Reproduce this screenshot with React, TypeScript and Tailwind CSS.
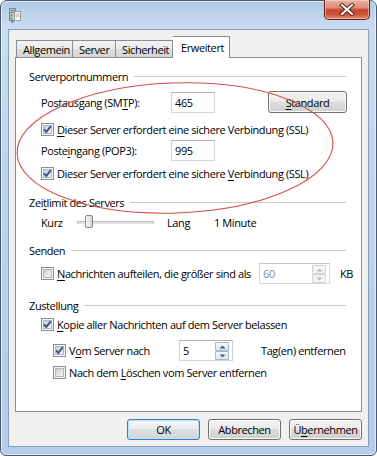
import React from "react";

const U = ({ children }: { children: React.ReactNode }) => (
  <span className="underline underline-offset-[2px] decoration-[1px]">{children}</span>
);

function Checkbox({ checked }: { checked?: boolean }) {
  return (
    <svg width="13" height="13" viewBox="0 0 13 13" className="shrink-0">
      <defs>
        <linearGradient id="cbg" x1="0" y1="0" x2="1" y2="1">
          <stop offset="0" stopColor="#c9cdd3" />
          <stop offset="1" stopColor="#f7f7f7" />
        </linearGradient>
      </defs>
      <rect x="0.5" y="0.5" width="12" height="12" fill="#f6f6f6" stroke="#8e8f8f" />
      <rect x="2.5" y="2.5" width="8" height="8" fill="url(#cbg)" stroke="#b2b7bd" />
      {checked && (
        <path d="M3.1 6.3 L5.3 8.9 L9.9 3.1" fill="none" stroke="#3a5596" strokeWidth="1.9" />
      )}
    </svg>
  );
}

function CbRow({
  checked,
  children,
  indent,
}: {
  checked?: boolean;
  children: React.ReactNode;
  indent?: boolean;
}) {
  return (
    <div className={indent ? "flex items-center h-[16px] pl-[37px]" : "flex items-center h-[16px] pl-[25px]"}>
      <Checkbox checked={checked} />
      <span className="ml-[3px] whitespace-nowrap">{children}</span>
    </div>
  );
}

function Header({ children, mt }: { children: React.ReactNode; mt: string }) {
  return (
    <div className={`flex items-center h-[16px] pl-[13px] pr-[15px] ${mt}`}>
      <span className="whitespace-nowrap">{children}</span>
      <div className="flex-1 ml-[6px] h-px bg-[#c3cad1]" />
    </div>
  );
}

function Btn({ children, def }: { children: React.ReactNode; def?: boolean }) {
  return (
    <div
      className={
        def
          ? "flex items-center justify-center w-[73px] h-[21px] rounded-[3px] border border-[#3c7fb1] shadow-[inset_0_0_0_1px_#b9e2f8] bg-[linear-gradient(180deg,#f3f5f7_0%,#eceef0_45%,#dde0e3_50%,#d0d4d8_100%)]"
          : "flex items-center justify-center w-[73px] h-[21px] rounded-[3px] border border-[#707070] shadow-[inset_0_0_0_1px_#fbfbfb] bg-[linear-gradient(180deg,#f2f2f2_0%,#ebebeb_45%,#dddddd_50%,#cfcfcf_100%)]"
      }
    >
      {children}
    </div>
  );
}

function SpinBtn({ up, disabled }: { up?: boolean; disabled?: boolean }) {
  return (
    <div
      className={
        disabled
          ? "flex items-center justify-center h-[9px] border border-[#d2d2d2] bg-[#f4f4f4] rounded-[1px]"
          : "flex items-center justify-center h-[9px] border border-[#a8b6c8] bg-[linear-gradient(180deg,#f4f7fa_0%,#dfe6ee_100%)] rounded-[1px]"
      }
    >
      <svg width="7" height="4" viewBox="0 0 7 4">
        {up ? (
          <path d="M0.5 3.5 L3.5 0.5 L6.5 3.5 Z" fill={disabled ? "#b9b9b9" : "#4b6188"} />
        ) : (
          <path d="M0.5 0.5 L3.5 3.5 L6.5 0.5 Z" fill={disabled ? "#b9b9b9" : "#4b6188"} />
        )}
      </svg>
    </div>
  );
}

function Spin({ value, disabled, wide }: { value: string; disabled?: boolean; wide?: boolean }) {
  return (
    <div
      className={
        wide
          ? "flex h-[21px] w-[71px] border border-[#d5d8dd] border-t-[#c2c5cb] bg-white"
          : "flex h-[21px] w-[54px] border border-[#d0d5dc] border-t-[#abadb3] bg-white"
      }
    >
      <div className={disabled ? "flex-1 flex items-center pl-[3px] text-[#8a8a8a]" : "flex-1 flex items-center pl-[3px]"}>
        {value}
      </div>
      <div className="flex flex-col w-[14px] mr-[3px] mt-[1px]">
        <SpinBtn up disabled={disabled} />
        <SpinBtn disabled={disabled} />
      </div>
    </div>
  );
}

function TextBox({ value }: { value: string }) {
  return (
    <div className="flex items-center w-[44px] h-[21px] pl-[3px] border border-[#d0d5dc] border-t-[#abadb3] bg-white">
      {value}
    </div>
  );
}

function AppIcon() {
  return (
    <svg width="12" height="16" viewBox="0 0 12 16">
      <rect x="0.5" y="1.5" width="6" height="12" fill="#c9ccce" stroke="#7d8286" />
      <rect x="1.5" y="3" width="4" height="1" fill="#6d7276" />
      <rect x="1.5" y="5" width="4" height="1" fill="#6d7276" />
      <rect x="1.5" y="7.5" width="2" height="2" fill="#58a83a" />
      <rect x="1.5" y="10.5" width="2" height="2" fill="#58a83a" />
      <rect x="5.5" y="4.5" width="6" height="9" fill="#f7f7f7" stroke="#9a9fa3" />
      <rect x="6.5" y="6.5" width="4" height="1" fill="#aab0b5" />
      <rect x="6.5" y="8.5" width="4" height="1" fill="#aab0b5" />
      <rect x="2" y="14" width="3" height="1.5" fill="#7d8286" />
    </svg>
  );
}

function CloseBtn() {
  return (
    <div className="-mt-px mr-[6px] w-[46px] h-[20px] rounded-b-[5px] border border-[#5b1f17] border-t-0 bg-[linear-gradient(180deg,#eab2a6_0%,#dc8c7a_40%,#c6452d_52%,#cf5038_75%,#e28a73_100%)] shadow-[inset_0_0_0_1px_rgba(255,220,210,0.55)] flex items-center justify-center">
      <svg width="16" height="13" viewBox="0 0 16 13">
        <path d="M3 2 L13 11 M13 2 L3 11" stroke="#4a1a12" strokeWidth="4" strokeLinecap="square" />
        <path d="M3 2 L13 11 M13 2 L3 11" stroke="#ffffff" strokeWidth="2.2" strokeLinecap="square" />
      </svg>
    </div>
  );
}

export default function App() {
  return (
    <div className="relative w-[377px] h-[456px] bg-white overflow-hidden font-['Open_Sans',sans-serif] text-[11px] tracking-[-0.4px] text-black leading-none">
      <div className="flex flex-col w-[377px] h-[456px] rounded-t-[7px] rounded-b-[6px] border border-[#4a5a70] bg-[linear-gradient(180deg,#b2cae6_0%,#cadcf1_6%,#bed4ec_40%,#b5cde9_100%)] shadow-[inset_0_0_0_1px_rgba(255,255,255,0.6)]">
        {/* title bar */}
        <div className="flex h-[28px] shrink-0 justify-between items-start">
          <div className="ml-[8px] mt-[6px]">
            <AppIcon />
          </div>
          <CloseBtn />
        </div>
        {/* client area */}
        <div className="mx-[7px] h-[418px] shrink-0 border border-[#8a9db6] bg-[#f0f0f0] flex flex-col">
          <div className="pl-[6px] pr-[6px] pt-[6px]">
            {/* tabs */}
            <div className="flex items-end h-[21px] pl-[1px]">
              <div className="flex items-center w-[57px] h-[17px] pl-[6px] border border-b-0 border-[#898c95] bg-[linear-gradient(180deg,#f3f3f3_0%,#ebebeb_50%,#dedede_51%,#d6d6d6_100%)]">
                Allgemein
              </div>
              <div className="flex items-center w-[43px] h-[17px] pl-[6px] border border-b-0 border-l-0 border-[#898c95] bg-[linear-gradient(180deg,#f3f3f3_0%,#ebebeb_50%,#dedede_51%,#d6d6d6_100%)]">
                Server
              </div>
              <div className="flex items-center w-[57px] h-[17px] pl-[6px] border border-b-0 border-l-0 border-[#898c95] bg-[linear-gradient(180deg,#f3f3f3_0%,#ebebeb_50%,#dedede_51%,#d6d6d6_100%)]">
                Sicherheit
              </div>
              <div className="relative z-10 flex items-start pt-[5px] w-[57px] h-[22px] -mb-px pl-[8px] border border-b-0 border-l-0 border-[#898c95] bg-white">
                Erweitert
              </div>
            </div>
            {/* panel */}
            <div className="h-[355px] border border-[#898c95] bg-white flex flex-col">
              <Header mt="mt-[10px]">Serverportnummern</Header>
              <div className="flex items-start h-[22px] mt-[7px] pl-[25px]">
                <span className="w-[130px] mt-[6px] whitespace-nowrap">
                  Postausgang (SM<U>T</U>P):
                </span>
                <div className="mt-px">
                  <TextBox value="465" />
                </div>
                <div className="ml-[53px] flex items-center justify-center w-[79px] h-[22px] rounded-[3px] border border-[#707070] shadow-[inset_0_0_0_1px_#fbfbfb] bg-[linear-gradient(180deg,#f2f2f2_0%,#ebebeb_45%,#dddddd_50%,#cfcfcf_100%)]">
                  <U>S</U>tandard
                </div>
              </div>
              <div className="mt-[8px]">
                <CbRow checked>
                  <U>D</U>ieser Server erfordert eine sichere Verbindung (SSL)
                </CbRow>
              </div>
              <div className="flex items-center h-[21px] mt-[3px] pl-[25px]">
                <span className="w-[130px] whitespace-nowrap">
                  Poste<U>i</U>ngang (POP3):
                </span>
                <TextBox value="995" />
              </div>
              <div className="mt-[4px]">
                <CbRow checked>
                  Dieser Server erfordert eine sichere <U>V</U>erbindung (SSL)
                </CbRow>
              </div>
              <Header mt="mt-[13px]">
                Zei<U>t</U>limit des Servers
              </Header>
              <div className="flex items-center h-[16px] mt-[4px] pl-[25px]">
                <span className="w-[36px]">Kurz</span>
                <div className="relative w-[77px] h-[16px] flex items-center">
                  <div className="w-full h-[3px] border border-[#b5b8bb] border-b-[#e2e4e6] bg-[#e6e8ea]" />
                  <div className="absolute left-[8px] top-[1px] w-[8px] h-[13px] rounded-[2px] border border-[#858a8f] bg-[linear-gradient(90deg,#f6f6f6_0%,#e4e4e4_60%,#d2d2d2_100%)]" />
                </div>
                <span className="ml-[13px] w-[47px]">Lang</span>
                <span>1 Minute</span>
              </div>
              <Header mt="mt-[12px]">Senden</Header>
              <div className="flex items-center h-[21px] mt-[5px] pl-[25px]">
                <Checkbox />
                <span className="ml-[3px] w-[202px] whitespace-nowrap">
                  <U>N</U>achrichten aufteilen, die größer sind als
                </span>
                <Spin value="60" disabled wide />
                <span className="ml-[10px]">KB</span>
              </div>
              <Header mt="mt-[13px]">Zustellung</Header>
              <div className="mt-[3px]">
                <CbRow checked>
                  <U>K</U>opie aller Nachrichten auf dem Server belassen
                </CbRow>
              </div>
              <div className="flex items-center h-[21px] mt-[8px] pl-[37px]">
                <Checkbox checked />
                <span className="ml-[3px] w-[110px] whitespace-nowrap">
                  V<U>o</U>m Server nach
                </span>
                <Spin value="5" />
                <span className="ml-[28px] whitespace-nowrap">Tag(en) entfernen</span>
              </div>
              <div className="mt-[3px]">
                <CbRow indent>
                  Nach dem <U>L</U>öschen vom Server entfernen
                </CbRow>
              </div>
            </div>
          </div>
          {/* buttons */}
          <div className="flex justify-end gap-[8px] pr-[6px] mt-[7px]">
            <Btn def>OK</Btn>
            <Btn>Abbrechen</Btn>
            <Btn>
              Ü<U>b</U>ernehmen
            </Btn>
          </div>
        </div>
      </div>
      <svg className="absolute left-0 top-0 pointer-events-none" width="377" height="456" viewBox="0 0 377 456">
        <ellipse
          cx="175"
          cy="148"
          rx="158"
          ry="65"
          transform="rotate(-2 175 148)"
          fill="none"
          stroke="#d4504c"
          strokeWidth="1.1"
        />
      </svg>
    </div>
  );
}
